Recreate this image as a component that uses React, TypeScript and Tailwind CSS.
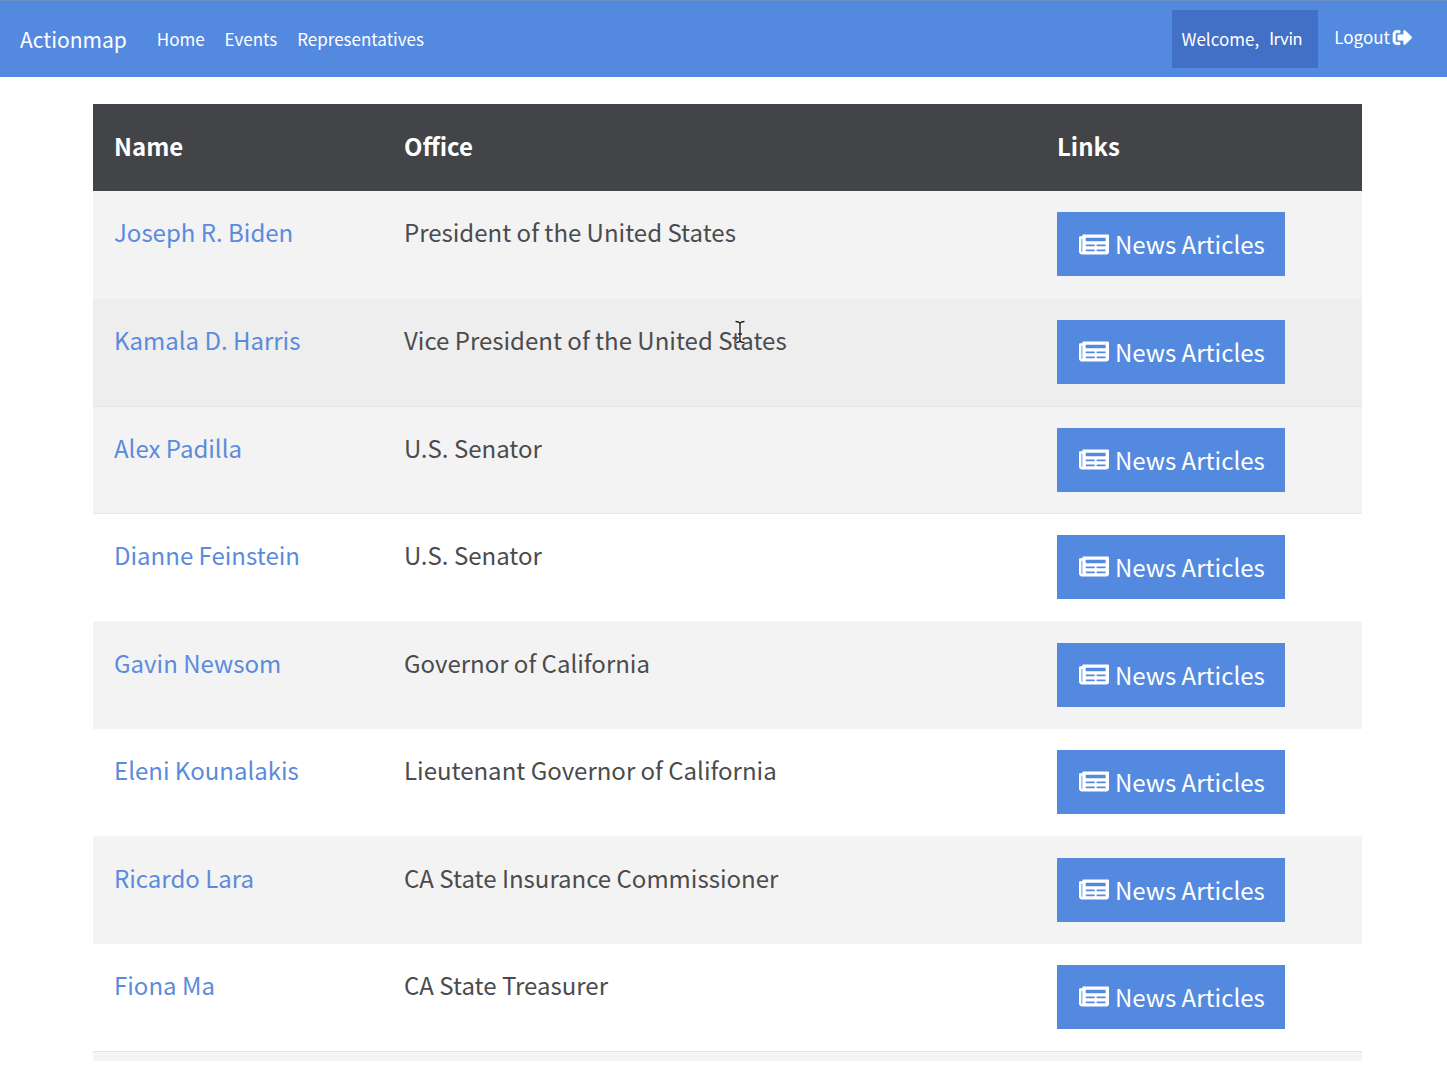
import React from "react";
import { FaNewspaper, FaSignOutAlt } from "react-icons/fa";

type Representative = {
  name: string;
  office: string;
  tone: string;
};

const representatives: Representative[] = [
  { name: "Joseph R. Biden", office: "President of the United States", tone: "bg-[#f3f3f4] border-[#f1f1f2]" },
  { name: "Kamala D. Harris", office: "Vice President of the United States", tone: "bg-[#eeeeef] border-[#e4e5e7]" },
  { name: "Alex Padilla", office: "U.S. Senator", tone: "bg-[#f3f3f4] border-[#e6e7e9]" },
  { name: "Dianne Feinstein", office: "U.S. Senator", tone: "bg-white border-[#f7f7f7]" },
  { name: "Gavin Newsom", office: "Governor of California", tone: "bg-[#f3f3f4] border-[#f3f3f4]" },
  { name: "Eleni Kounalakis", office: "Lieutenant Governor of California", tone: "bg-white border-[#f7f7f7]" },
  { name: "Ricardo Lara", office: "CA State Insurance Commissioner", tone: "bg-[#f3f3f4] border-[#f3f3f4]" },
  { name: "Fiona Ma", office: "CA State Treasurer", tone: "bg-white border-[#e2e3e5]" },
];

function TextCursor() {
  return (
    <svg
      className="absolute left-[351px] top-[21px] h-6 w-3"
      viewBox="0 0 12 24"
      fill="none"
      aria-hidden="true"
    >
      <path d="M1.5 1.5c2.5 0 4.5 .8 4.5 2.6V20c0 1.6-2 2.5-4.5 2.5M10.5 1.5c-2.5 0-4.5 .8-4.5 2.6M6 20c0 1.6 2 2.5 4.5 2.5M4 14h4" stroke="#fff" strokeWidth="2.6" />
      <path d="M1.5 1.5c2.5 0 4.5 .8 4.5 2.6V20c0 1.6-2 2.5-4.5 2.5M10.5 1.5c-2.5 0-4.5 .8-4.5 2.6M6 20c0 1.6 2 2.5 4.5 2.5M4 14h4" stroke="#1c1c1c" strokeWidth="1.4" />
    </svg>
  );
}

function NavBar() {
  return (
    <nav className="flex h-[77px] items-center justify-between border-t border-[#6b8fc4] bg-[#5489e0] pl-5 pr-[35px] text-[17px] leading-7 text-white">
      <div className="flex items-center pb-px">
        <a href="#" className="mr-[30px] text-[21px]">
          Actionmap
        </a>
        <div className="flex gap-5">
          <a href="#">Home</a>
          <a href="#">Events</a>
          <a href="#">Representatives</a>
        </div>
      </div>
      <div className="flex items-center gap-4">
        <div className="flex h-[58px] items-center gap-[10px] bg-[#4270c6] pl-[10px] pr-4">
          <span>Welcome,</span>
          <span className="font-[Lato,sans-serif]">Irvin</span>
        </div>
        <a href="#" className="flex items-center gap-[3px] pb-1">
          Logout
          <FaSignOutAlt className="size-[19px] overflow-visible stroke-white stroke-[18]" />
        </a>
      </div>
    </nav>
  );
}

export default function App() {
  return (
    <div className="min-h-screen bg-white font-['Noto_Sans_CJK_SC',sans-serif]">
      <NavBar />
      <main className="ml-[93px] mr-[85px] mt-[27px]">
        <table className="w-full table-fixed text-left text-[24px] leading-10 text-[#4b4b4c]">
          <thead className="bg-[#434447] text-white">
            <tr className="h-[87px]">
              <th className="w-[290px] px-[21px] pb-1 font-bold">Name</th>
              <th className="px-[21px] pb-1 font-bold">Office</th>
              <th className="w-[326px] px-[21px] pb-1 font-bold">Links</th>
            </tr>
          </thead>
          <tbody>
            {representatives.map((rep, index) => (
              <tr
                key={rep.name}
                className={`border-b align-top ${rep.tone} ${index % 2 === 0 ? "h-[107px]" : "h-[108px]"}`}
              >
                <td className="px-[21px] pt-[21px]">
                  <a href="#" className="text-[#5b8bdc]">
                    {rep.name}
                  </a>
                </td>
                <td className="relative px-[21px] pt-[21px]">
                  {rep.office}
                  {index === 1 && <TextCursor />}
                </td>
                <td className="px-[21px] pt-[21px]">
                  <button
                    type="button"
                    className="flex h-16 items-center gap-[6px] bg-[#5489e0] pl-[22px] pr-5 text-white"
                  >
                    <FaNewspaper className="h-[27px] w-[30px]" />
                    News Articles
                  </button>
                </td>
              </tr>
            ))}
          </tbody>
        </table>
        <div className="h-[9px] bg-[#f4f4f5]" />
      </main>
    </div>
  );
}
